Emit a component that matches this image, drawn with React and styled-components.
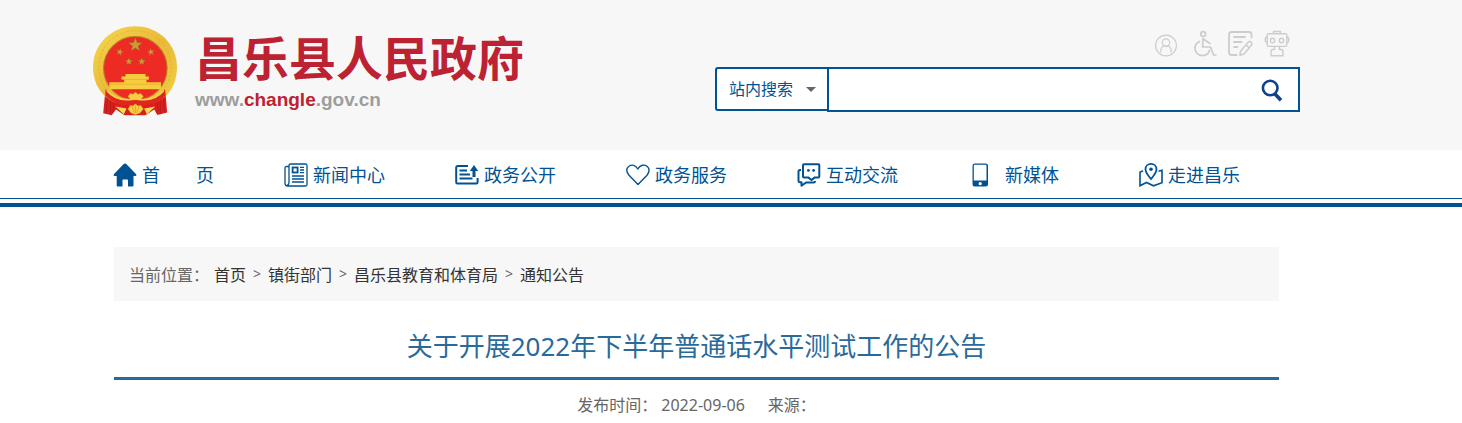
import styled, { createGlobalStyle } from 'styled-components';

const navy = '#005293';
const blue = '#2a6a9b';
const gray = '#f7f7f7';

const HomeIcon = () => (
	<svg width='24' height='24' viewBox='0 0 24 24' fill={navy}>
		<path d='M12 0.5 C12.7 0.5 13.2 0.8 13.8 1.4 L22.9 11 C23.8 12 23.4 13 22.2 13 H20.5 V22 C20.5 23 20 23.5 19 23.5 H15 V17.5 C15 16.8 14.7 16.5 14 16.5 H10.5 C9.8 16.5 9.5 16.8 9.5 17.5 V23.5 H5.2 C4.2 23.5 3.7 23 3.7 22 V13 H1.8 C0.6 13 0.2 12 1.1 11 L10.2 1.4 C10.8 0.8 11.3 0.5 12 0.5 Z' />
	</svg>
);

const NewsIcon = () => (
	<svg width='24' height='24' viewBox='0 0 24 24' fill='none' stroke={navy} strokeWidth='1.3'>
		<path d='M5 3.5 H2.5 Q1 3.5 1 5 V20 Q1 23 3.5 23 H21.5 Q23 23 23 21.5 V2.5 Q23 1 21.5 1 H6.5 Q5 1 5 2.5 V19.5 Q5 22 3 22.5' />
		<rect x='8.6' y='4.5' width='5' height='5' strokeWidth='1.8' />
		<path d='M16 4.3 H20 M16 7 H20 M16 9.7 H20' />
		<path d='M8 13 H20 M8 16 H20 M8 19 H20' strokeWidth='1.5' />
	</svg>
);

const OpenIcon = () => (
	<svg width='24' height='24' viewBox='0 0 24 24' fill='none' stroke={navy} strokeWidth='2'>
		<path d='M13 3 H2.5 Q1.2 3 1.2 4.5 V19 Q1.2 20.5 2.5 20.5 H21.5 Q22.6 20.5 22.6 19 V15' />
		<path d='M4.5 7.5 H12 M4.5 11.5 H15 M4.5 15.5 H17.5' strokeWidth='1.8' />
		<path d='M19 14 V6' strokeWidth='3' />
		<path d='M19 2 L23.2 8 H14.8 Z' fill={navy} stroke='none' />
	</svg>
);

const HeartIcon = () => (
	<svg width='24' height='24' viewBox='0 0 24 24' fill='none' stroke={navy} strokeWidth='1.4' strokeLinejoin='round' strokeLinecap='round'>
		<path d='M12 21.5 L3 12.2 C-0.2 8.8 0.2 5.2 3 3.2 C5.8 1.2 9.8 2 11.8 6 C14 1.8 18.3 1.2 21 3.2 C23.7 5.3 23.8 9 21 12.2 Z' />
	</svg>
);

const ChatIcon = () => (
	<svg width='24' height='24' viewBox='0 0 24 24' fill='none' stroke={navy} strokeWidth='2' strokeLinejoin='round'>
		<path d='M7 1.3 H21.5 Q22.3 1.3 22.3 2.2 V13.5 Q22.3 14.6 21.3 14.6 H17.5 L14.5 17 L11.5 14.6 H7 Q6 14.6 6 13.6 V2.3 Q6 1.3 7 1.3 Z' />
		<path d='M4 7 H3 Q1.5 7 1.5 8.5 V18 Q1.5 19.2 3 19.2 H4.5 V22.7 L9 19.5 H16.5 Q18 19.5 18 18' />
		<g fill={navy} stroke='none'>
			<circle cx='11.4' cy='7.4' r='1.4' />
			<circle cx='16.6' cy='7.4' r='1.4' />
		</g>
	</svg>
);

const PhoneIcon = () => (
	<svg width='24' height='24' viewBox='0 0 24 24' fill={navy}>
		<path fillRule='evenodd' d='M6.5 0.5 H17.5 Q20 0.5 20 3 V21 Q20 23.5 17.5 23.5 H6.5 Q4.5 23.5 4.5 21 V3 Q4.5 0.5 6.5 0.5 Z M6.8 1.8 Q5.8 1.8 5.8 3 V17.5 H18.5 V3 Q18.5 1.8 17.4 1.8 Z' />
		<circle cx='12.2' cy='20.7' r='1.6' fill='#fff' />
	</svg>
);

const MapIcon = () => (
	<svg width='24' height='24' viewBox='0 0 24 24' fill='none' stroke={navy} strokeWidth='1.6'>
		<path d='M4 7.8 L1 9.2 V22.8 L7.5 19.5 L14.5 22.8 L23 19.8 V7.2 L19.5 8.2' />
		<path d='M12 16 C9.5 12.8 6.5 9.8 6.5 6.2 C6.5 3 9 0.9 12 0.9 C15 0.9 17.5 3 17.5 6.2 C17.5 9.8 14.5 12.8 12 16 Z' strokeWidth='1.8' />
		<circle cx='12' cy='6.3' r='1.8' fill={navy} stroke='none' />
	</svg>
);

const SearchIcon = () => (
	<svg width='22' height='24' viewBox='0 0 22 24' fill='none' stroke='#10418e'>
		<circle cx='9.2' cy='10' r='7.3' strokeWidth='2.6' />
		<path d='M14 16 L20 22.3' strokeWidth='3.6' />
	</svg>
);

const UserIcon = () => (
	<svg width='28' height='27' viewBox='0 0 28 27' fill='none' stroke='#cdcdcd' strokeWidth='1.2'>
		<circle cx='12' cy='15.5' r='10.4' />
		<circle cx='12' cy='12.6' r='3.7' />
		<path d='M6.8 22.5 V20.5 Q7 16.4 10.5 16 H13.5 Q17 16.4 17.2 20.5 V22.5' />
	</svg>
);

const WheelchairIcon = () => (
	<svg width='24' height='27' viewBox='0 0 24 27' fill='none' stroke='#cdcdcd' strokeWidth='1.7' strokeLinecap='round' strokeLinejoin='round'>
		<circle cx='10.2' cy='4' r='2.4' />
		<path d='M10 8.8 L9.6 17 H17.5 L20.5 25 H22.8' />
		<path d='M10.3 9 L17 13.5' />
		<path d='M6.5 11.5 C3.1 13 1.7 16 2.1 19.2 C2.6 23 5.7 25.6 9.5 25.6 C13.3 25.6 15.8 23.4 16.5 20.3' />
	</svg>
);

const NoteIcon = () => (
	<svg width='25' height='27' viewBox='0 0 25 27' fill='none' stroke='#cdcdcd' strokeWidth='1.8' strokeLinecap='round' strokeLinejoin='round'>
		<path d='M8.5 25 H3.5 Q1 25 1 22.5 V4.5 Q1 2 3.5 2 H21 Q23.5 2 23.5 4.5 V7.5' />
		<path d='M6 7 H17 M6 12 H13.5 M6 17 H9.5' />
		<path d='M20 12.5 Q21.5 10.8 23.2 12.2 Q24.6 13.8 23.2 15.4 L16 24 L12 25.2 L12.5 21.2 Z M18 15 L21.2 17.7' strokeWidth='1.5' />
	</svg>
);

const RobotIcon = () => (
	<svg width='26' height='27' viewBox='0 0 26 27' fill='none' stroke='#cdcdcd' strokeWidth='1.4' strokeLinejoin='round'>
		<path d='M9.5 3.5 V1.5 H16.5 V3.5' />
		<path d='M4.5 3.7 H21.5 Q22.8 3.7 22.8 5 V15 Q22.8 16.4 21.5 16.4 H4.5 Q3.2 16.4 3.2 15 V5 Q3.2 3.7 4.5 3.7 Z' />
		<path d='M3 7 Q1.2 7.3 1.2 9.8 Q1.2 12.3 3 12.6 M23 7 Q24.8 7.3 24.8 9.8 Q24.8 12.3 23 12.6' />
		<circle cx='8.5' cy='10.5' r='2.2' />
		<circle cx='17.5' cy='10.5' r='2.2' />
		<path d='M10.5 16.4 V19.5 H9 Q7 19.5 7 21.2 V25.8 H19 V21.2 Q19 19.5 17 19.5 H15.5 V16.4' />
	</svg>
);

const star = '0,-20 4.8,-6.3 19,-6.2 7.6,2.5 11.8,16.2 0,8 -11.8,16.2 -7.6,2.5 -19,-6.2 -4.8,-6.3';

const Emblem = () => (
	<svg width='84' height='90' viewBox='27 33 248 266'>
		<defs>
			<linearGradient id='gold' x1='0' y1='0' x2='1' y2='1'>
				<stop offset='0' stopColor='#f7d84e' />
				<stop offset='0.5' stopColor='#e9ba38' />
				<stop offset='1' stopColor='#f3cf43' />
			</linearGradient>
		</defs>
		<path d='M64 218 L57 291 L82 297 L95 280 L120 297 L182 297 L208 280 L217 296 L246 289 L240 218 Z' fill='#d9201f' />
		<path d='M70 235 L66 290 M79 240 L78 294 M90 248 L86 288 M234 235 L238 288 M225 242 L226 292 M215 250 L219 287' stroke='#b91a1b' strokeWidth='3' fill='none' />
		<path d='M151 34 C221 34 275 87 275 155 C275 205 250 244 213 258 L152 264 L90 258 C52 242 27 204 27 155 C27 87 81 34 151 34 Z' fill='url(#gold)' />
		<circle cx='151' cy='154' r='107' fill='none' stroke='#dba937' strokeWidth='2' strokeDasharray='7 5' />
		<circle cx='152' cy='158' r='94' fill='#ee2a24' stroke='#b98029' strokeWidth='3' />
		<g fill='#cf9a35' stroke='#8e5a20' strokeWidth='1'>
			<polygon points={star} transform='translate(152 89) scale(1.1)' />
			<polygon points={star} transform='translate(106 110) rotate(12) scale(0.58)' />
			<polygon points={star} transform='translate(198 110) rotate(-12) scale(0.58)' />
			<polygon points={star} transform='translate(133 138) scale(0.6)' />
			<polygon points={star} transform='translate(171 138) scale(0.6)' />
		</g>
		<path d='M123 175 H182 V182 H192 V191 H185 V199 H228 V220 H75 V199 H119 V191 H111 V182 H123 Z' fill='#f6cd3f' />
		<path d='M114 191 H190 M76 205 H228' stroke='#e2ab2c' strokeWidth='2' />
		<path d='M64 220 Q98 262 152 247 Q206 262 240 220 L242 239 Q207 275 152 265 Q99 275 63 239 Z' fill='#e3251f' />
		<path d='M130 241 L137 232 L145 235 L152 228 L160 235 L168 232 L176 241 L166 252 H140 Z' fill='#f7cd42' stroke='#c4861f' />
		<path d='M68 224 Q98 258 145 249 M236 224 Q206 258 159 249' fill='none' stroke='#f6d14a' strokeWidth='5' />
		<path d='M93 271 L126 277 L118 294 Z M211 271 L178 277 L186 294 Z' fill='#f8dc57' />
		<path d='M130 278 L137 267 L145 269 L152 263 L160 269 L168 267 L176 278 L166 290 L152 295 L139 290 Z' fill='#f5cf43' stroke='#c4861f' />
		<path d='M142 270 L149 289 M152 267 V291 M163 270 L156 289' stroke='#d69b28' strokeWidth='2' />
	</svg>
);

const menus = [
	{ name: '首\u3000\u3000页', Icon: HomeIcon },
	{ name: '新闻中心', Icon: NewsIcon },
	{ name: '政务公开', Icon: OpenIcon },
	{ name: '政务服务', Icon: HeartIcon },
	{ name: '互动交流', Icon: ChatIcon },
	{ name: '新媒体', Icon: PhoneIcon, wide: true },
	{ name: '走进昌乐', Icon: MapIcon },
];

const tools = [
	{ name: '用户中心', Icon: UserIcon },
	{ name: '无障碍', Icon: WheelchairIcon },
	{ name: '留言', Icon: NoteIcon },
	{ name: '智能问答', Icon: RobotIcon },
];

const paths = ['首页', '镇街部门', '昌乐县教育和体育局', '通知公告'];

const App = () => {
	return (
		<>
			<GlobalStyle />
			<Header>
				<HeaderInner>
					<Logo href='#'>
						<Emblem />
						<LogoText>
							<SiteName>昌乐县人民政府</SiteName>
							<SiteUrl>
								www.<strong>changle</strong>.gov.cn
							</SiteUrl>
						</LogoText>
					</Logo>
					<HeaderSide>
						<Tools>
							{tools.map(({ name, Icon }) => (
								<ToolLink href='#' key={name} aria-label={name}>
									<Icon />
								</ToolLink>
							))}
						</Tools>
						<SearchForm onSubmit={e => e.preventDefault()}>
							<SelectBox>
								<Select aria-label='搜索范围'>
									<option>站内搜索</option>
								</Select>
								<Arrow />
							</SelectBox>
							<InputBox>
								<SearchInput type='text' aria-label='搜索' />
								<SearchButton type='submit' aria-label='搜索'>
									<SearchIcon />
								</SearchButton>
							</InputBox>
						</SearchForm>
					</HeaderSide>
				</HeaderInner>
			</Header>
			<Nav>
				<MenuList>
					{menus.map(({ name, Icon, wide }) => (
						<li key={name}>
							<MenuLink href='#' $wide={wide}>
								<Icon />
								{name}
							</MenuLink>
						</li>
					))}
				</MenuList>
			</Nav>
			<Main>
				<Content>
					<Location>
						<span>当前位置：</span>
						{paths.map((path, i) => (
							<PathItem key={path}>
								{i > 0 && <span>&gt;</span>}
								<a href='#'>{path}</a>
							</PathItem>
						))}
					</Location>
					<Title>关于开展2022年下半年普通话水平测试工作的公告</Title>
					<Meta>
						<span>
							发布时间： <time>2022-09-06</time>
						</span>
						<span>来源：</span>
					</Meta>
				</Content>
			</Main>
		</>
	);
};

export default App;

const GlobalStyle = createGlobalStyle`
	* {
		box-sizing: border-box;
	}
	body {
		margin: 0;
		background: #fff;
		color: #666;
		font-size: 16px;
		font-family: 'Noto Sans', 'Noto Sans CJK SC', sans-serif;
		font-weight: 400;
	}
	a {
		text-decoration: none;
	}
	svg {
		display: block;
		flex-shrink: 0;
	}
`;

const Header = styled.header`
	padding-right: 69px;
	background: ${gray};
`;

const HeaderInner = styled.div`
	display: flex;
	justify-content: space-between;
	max-width: 1207px;
	min-height: 150px;
	margin: 0 auto;
`;

const Logo = styled.a`
	display: flex;
	align-items: flex-start;
	gap: 18px;
	padding-top: 26px;
`;

const LogoText = styled.div`
	display: flex;
	flex-direction: column;
	padding-top: 6px;
`;

const SiteName = styled.span`
	color: #bd2233;
	font-size: 47px;
	font-weight: 700;
	font-family: 'Liberation Sans', 'Noto Sans CJK SC', sans-serif;
	line-height: 56px;
`;

const SiteUrl = styled.span`
	color: #9d9d9d;
	font-size: 19px;
	font-weight: 700;
	font-family: 'Liberation Sans', Arial, sans-serif;
	line-height: 24px;
	strong {
		color: #bd2233;
	}
`;

const HeaderSide = styled.div`
	display: flex;
	flex-direction: column;
	align-items: flex-end;
	gap: 10px;
	padding-top: 30px;
`;

const Tools = styled.div`
	display: flex;
	gap: 11px;
	padding-right: 10px;
`;

const ToolLink = styled.a`
	display: block;
`;

const SearchForm = styled.form`
	display: flex;
	align-items: flex-start;
`;

const SelectBox = styled.div`
	display: flex;
	align-items: center;
	width: 112px;
	height: 44px;
	padding-right: 11px;
	border: 2px solid ${navy};
	border-right: 0;
	border-radius: 3px 0 0 3px;
	background: #fff;
`;

const Select = styled.select`
	flex: 1;
	height: 100%;
	padding: 0 0 0 12px;
	border: 0;
	outline: 0;
	background: transparent;
	color: ${navy};
	font: inherit;
	appearance: none;
`;

const Arrow = styled.span`
	border: 5px solid transparent;
	border-top-color: #666;
	border-bottom: 0;
	pointer-events: none;
`;

const InputBox = styled.div`
	display: flex;
	width: 473px;
	height: 45px;
	border: 2px solid ${navy};
	background: #fff;
`;

const SearchInput = styled.input`
	flex: 1;
	min-width: 0;
	padding: 0 12px;
	border: 0;
	outline: 0;
	background: transparent;
	font: inherit;
`;

const SearchButton = styled.button`
	display: flex;
	align-items: center;
	padding: 0 15px;
	border: 0;
	background: transparent;
	cursor: pointer;
`;

const Nav = styled.nav`
	padding-right: 69px;
	border-bottom: 4px solid ${navy};
	background: linear-gradient(${navy}, ${navy}) 0 48px / 100% 1px no-repeat;
`;

const MenuList = styled.ul`
	display: grid;
	grid-template-columns: repeat(7, 1fr);
	max-width: 1197px;
	margin: 0 auto;
	padding: 0 0 5px;
	list-style: none;
`;

const MenuLink = styled.a`
	display: flex;
	align-items: center;
	gap: ${({ $wide }) => ($wide ? '13px' : '5px')};
	height: 48px;
	padding: 2px 0 0 15px;
	color: ${navy};
	font-size: 18px;
	line-height: 24px;
	white-space: pre;
`;

const Main = styled.main`
	padding-right: 69px;
`;

const Content = styled.div`
	max-width: 1165px;
	margin: 0 auto;
	padding-top: 40px;
`;

const Location = styled.div`
	display: flex;
	align-items: center;
	height: 54px;
	padding: 0 15px;
	background: ${gray};
	a {
		color: #333;
	}
	& > span:first-child {
		margin-right: 5px;
	}
`;

const PathItem = styled.span`
	display: flex;
	span {
		width: 22px;
		font-size: 14px;
		line-height: 24px;
		text-align: center;
	}
`;

const Title = styled.h1`
	margin: 0;
	padding: 25px 0 11px;
	border-bottom: 3px solid ${blue};
	color: ${blue};
	font-size: 26px;
	font-weight: 400;
	line-height: 40px;
	text-align: center;
`;

const Meta = styled.div`
	display: flex;
	justify-content: center;
	gap: 23px;
	padding: 13px 0 6px;
	line-height: 24px;
`;
